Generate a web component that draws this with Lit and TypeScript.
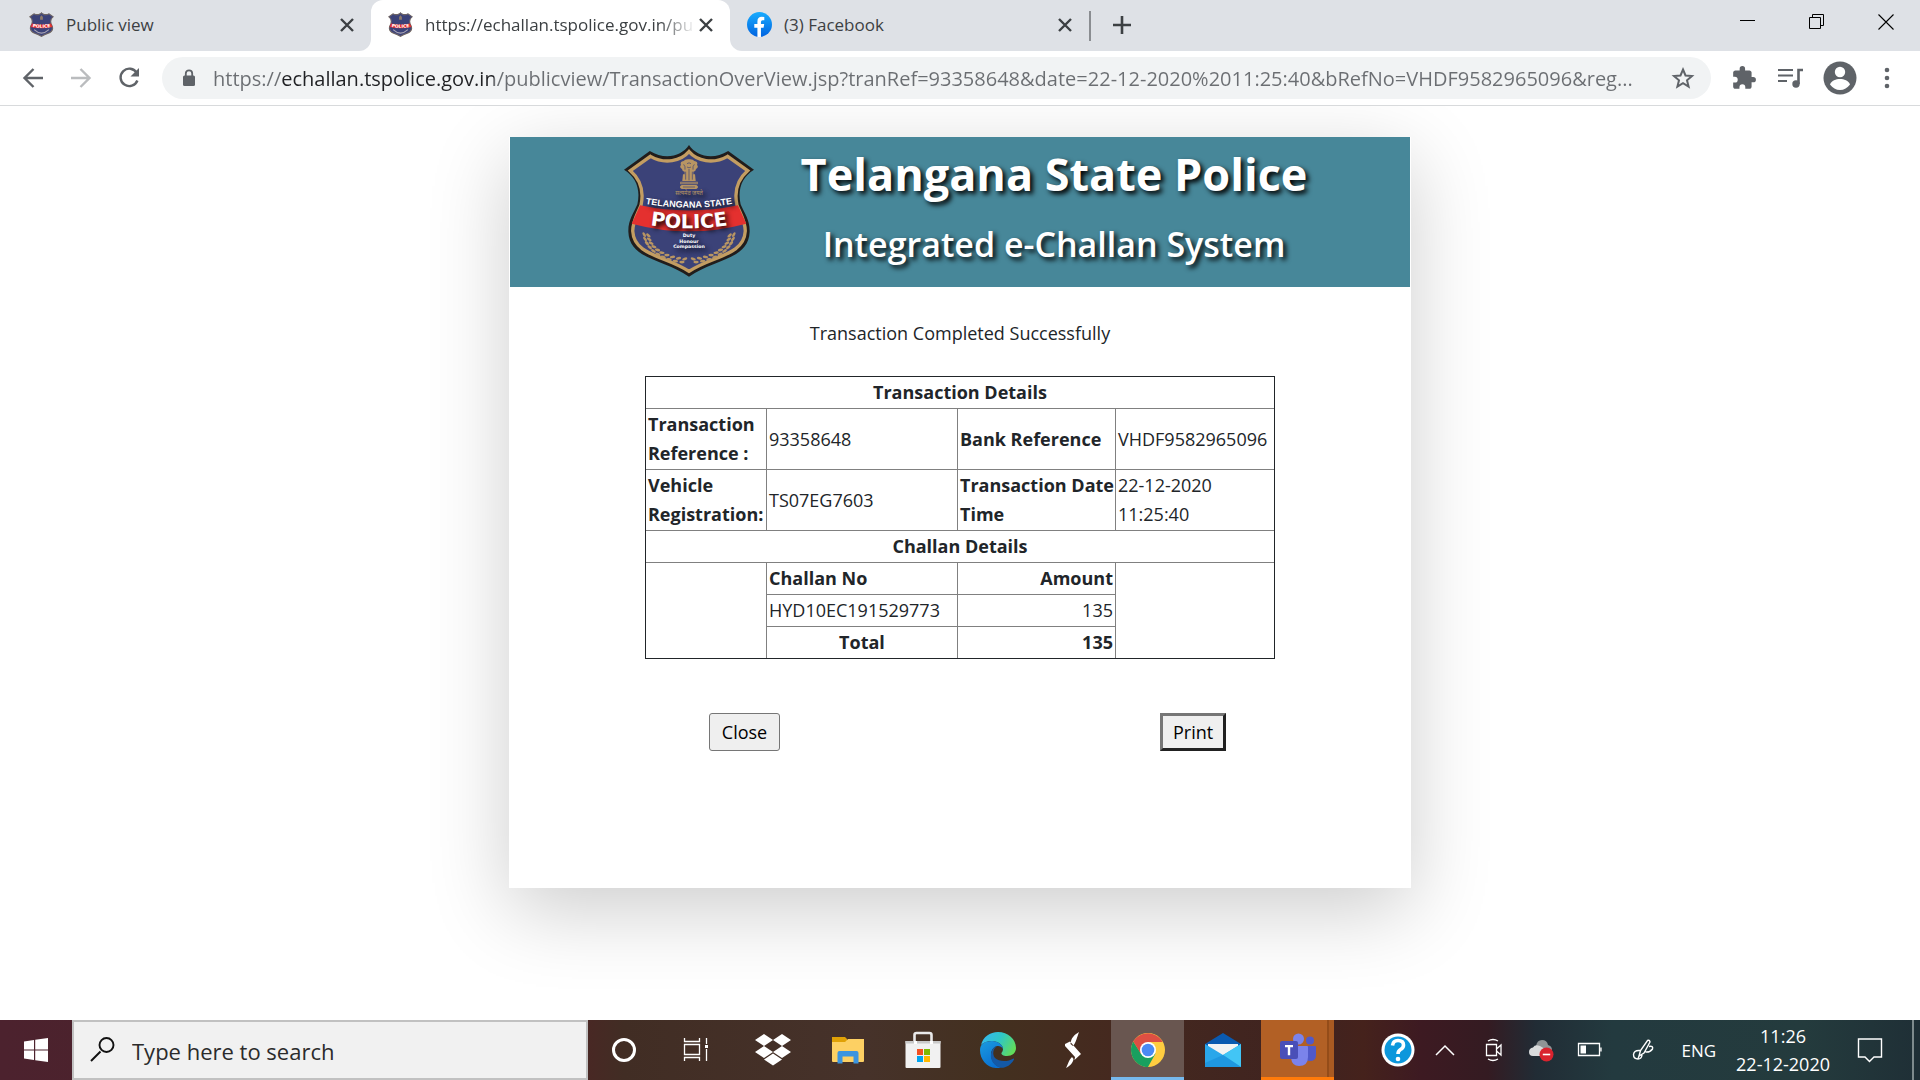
import { LitElement, html, css, svg } from "lit";
import { customElement, property } from "lit/decorators.js";

const SHIELD =
  "M194 0 C172 34 122 46 77 18 L0 74 C36 96 50 132 40 178 C28 206 12 226 13 260 C16 345 120 342 194 395 C268 342 372 345 375 260 C376 226 360 206 348 178 C338 132 352 96 388 74 L311 18 C266 46 216 34 194 0 Z";
const SHIELD_INNER =
  "M194 20 C170 48 122 59 79 34 L19 77 C50 104 60 136 51 180 C40 208 26 228 26 258 C30 333 125 332 194 379 C263 332 358 333 362 258 C362 228 348 208 337 180 C328 136 338 104 369 77 L309 34 C266 59 218 48 194 20 Z";

/** Laurel leaves of the crest, laid in pairs along two mirrored arcs. */
const leaves = Array.from({ length: 10 }, (_, i) => {
  const t = i / 9;
  const a = Math.PI * (0.98 - t * 0.44);
  return { x: 194 + 128 * Math.cos(a), y: 266 + 82 * Math.sin(a), r: 60 - t * 60 };
});

@customElement("police-crest")
export class PoliceCrest extends LitElement {
  @property({ type: Boolean }) compact = false;

  static styles = css`
    :host { display: block; flex: none; }
    svg { display: block; width: 100%; height: 100%; }
    .label { font-family: "Liberation Sans", Arial, sans-serif; font-weight: 700; fill: #fff; }
    .wide { font-family: "DejaVu Sans", Verdana, sans-serif; font-weight: 700; fill: #fff; }
    .motto { font-family: "Noto Sans Devanagari", "Noto Sans", sans-serif; fill: #b89563; }
  `;

  render() {
    const detail = svg`
      <g fill="#b89563">
        <path d="M170 60 q-4 -10 8 -12 q4 -6 16 -5 q12 -1 16 5 q12 2 8 12 q6 6 -3 12 q-1 8 -8 8 v12 h-26 v-12 q-7 0 -8 -8 q-9 -6 -3 -12z"/>
        <path d="M176 88 h36 l2 20 h-40z"/>
        <path d="M168 110 h52 v8 h-52z M172 120 h44 q10 6 0 12 h-44 q-10 -6 0 -12z"/>
      </g>
      <g fill="none" stroke="#3b4278" stroke-width="2">
        <path d="M178 58 q6 6 4 16 M210 58 q-6 6 -4 16 M188 56 q6 -5 12 0 M188 66 q6 5 12 0 M184 80 v24 M194 72 v34 M204 80 v24 M170 114 h48 M176 126 h36"/>
      </g>
      <text class="motto" x="194" y="150" font-size="17" text-anchor="middle">सत्यमेव जयते</text>
      <path id="arc1" d="M50 174 Q194 202 338 174" fill="none"/>
      <text class="label" font-size="27" text-anchor="middle"><textPath href="#arc1" startOffset="50%">TELANGANA STATE</textPath></text>
      <g class="wide" font-size="14" text-anchor="middle">
        <text x="194" y="276">Duty</text>
        <text x="194" y="293">Honour</text>
        <text x="194" y="310">Compassion</text>
      </g>
      <g fill="#b89563">
        ${leaves.map(
          (l) => svg`
          <ellipse cx=${l.x - 5} cy=${l.y + 4} rx="8" ry="4" transform="rotate(${l.r} ${l.x} ${l.y})"/>
          <ellipse cx=${l.x + 5} cy=${l.y - 4} rx="8" ry="4" transform="rotate(${l.r - 20} ${l.x} ${l.y})"/>
          <ellipse cx=${388 - l.x + 5} cy=${l.y + 4} rx="8" ry="4" transform="rotate(${-l.r} ${388 - l.x} ${l.y})"/>
          <ellipse cx=${388 - l.x - 5} cy=${l.y - 4} rx="8" ry="4" transform="rotate(${20 - l.r} ${388 - l.x} ${l.y})"/>`
        )}
      </g>`;
    return html`<svg viewBox="0 0 388 396" preserveAspectRatio="none" role="img" aria-label="Telangana State Police">
      <path d=${SHIELD} fill=${this.compact ? "#6d6258" : "#211d1c"} />
      <path d=${SHIELD_INNER} fill="#3b4278" stroke=${this.compact ? "#6f6a78" : "#c39d62"} stroke-width="10" />
      <path d="M48 181 Q194 212 340 181 L365 236 Q194 282 23 236 Z" fill="#e4302f" />
      <path id="arc2" d="M26 230 Q194 270 362 230" fill="none" />
      <text class="wide" font-size=${this.compact ? 70 : 58} text-anchor="middle">
        <textPath href="#arc2" startOffset="50%">POLICE</textPath>
      </text>
      ${this.compact
        ? svg`<path d="M194 50 l22 30 v44 h-44 v-44z" fill="#8d7a68"/><path d="M80 280 Q194 390 308 280" fill="none" stroke="#a9a4b4" stroke-width="16"/>`
        : detail}
    </svg>`;
  }
}

const stroke = (d: string, w = 2) =>
  svg`<path d=${d} fill="none" stroke="currentColor" stroke-width=${w}/>`;

const cross = html`<svg class="cross" viewBox="0 0 16 16">${stroke("M2 2 L14 14 M14 2 L2 14", 2.4)}</svg>`;

@customElement("browser-chrome")
export class BrowserChrome extends LitElement {
  static styles = css`
    :host { display: block; font-family: "Open Sans", "Segoe UI", sans-serif; }
    * { box-sizing: border-box; }
    svg { display: block; flex: none; }
    button { border: 0; padding: 0; margin: 0; background: none; color: inherit; display: flex; align-items: center; justify-content: center; }
    .tabs { display: flex; height: 51px; background: #dee1e6; color: #3c4043; }
    .tab { display: flex; align-items: center; width: 359px; padding: 0 16px 2px 17px; gap: 12px; }
    .tab.first { width: 371px; padding-left: 29px; border-bottom-right-radius: 12px; background: #dee1e6; }
    .tab.active { background: #fff; border-radius: 12px 12px 0 0; }
    .tab.last { border-bottom-left-radius: 12px; background: #dee1e6; }
    .under { background: linear-gradient(#dee1e6 50%, #fff 50%); display: flex; }
    .title { flex: 1; min-width: 0; overflow: hidden; white-space: nowrap; font-size: 17px; line-height: 24px; }
    .active .title { margin-right: -10px; -webkit-mask-image: linear-gradient(90deg, #000 86%, transparent); mask-image: linear-gradient(90deg, #000 86%, transparent); }
    .fav { width: 25px; height: 25px; }
    .cross { width: 16px; height: 16px; }
    .new { border-left: 2px solid #8a8d91; height: 30px; margin-top: 11px; padding: 0 0 2px 21px; }
    .spacer { flex: 1; }
    .win { width: 69px; height: 43px; color: #000; }
    .bar { display: flex; align-items: center; height: 55px; padding: 0 22px 0 21px; background: #fff; border-bottom: 1px solid #d8dadc; color: #5f6368; }
    .nav { width: 24px; height: 24px; margin-right: 24px; }
    .nav.off { color: #babcbe; }
    .nav.reload { margin-right: 21px; }
    .omni { flex: 1; min-width: 0; display: flex; align-items: center; height: 42px; border-radius: 21px; background: #f1f3f4; padding: 0 16px 0 19px; }
    .omni input {
      flex: 1; min-width: 0; border: 0; outline: 0; padding: 0; margin: 0 12px 0 16px; height: 34px;
      font-family: inherit; font-size: 20px; text-overflow: ellipsis;
      color: transparent; -webkit-text-fill-color: transparent;
      background-image: linear-gradient(90deg, #6b6e72 68px, #202124 68px, #202124 281px, #6b6e72 281px);
      -webkit-background-clip: text; background-clip: text;
    }
    .tools { display: flex; align-items: center; margin-left: 20px; gap: 19px; }
  `;

  render() {
    return html`
      <div class="tabs">
        <div class="under">
          <div class="tab first"><police-crest class="fav" compact></police-crest><span class="title">Public view</span><button aria-label="Close tab">${cross}</button></div>
          <div class="tab active"><police-crest class="fav" compact></police-crest><span class="title">https://echallan.tspolice.gov.in/pu</span><button aria-label="Close tab">${cross}</button></div>
          <div class="tab last">
            <svg class="fav" viewBox="0 0 24 24"><defs><linearGradient id="fb" x1="0" y1="0" x2="0" y2="1"><stop offset="0" stop-color="#18acfe"/><stop offset="1" stop-color="#0163e0"/></linearGradient></defs><circle cx="12" cy="12" r="12" fill="url(#fb)"/><path d="M10 24 v-9 H7 v-3.500 h3 V9 q0-4.400 4.200-4.400 q1.400 0 2.400.3 v3 h-1.600 q-1.600 0-1.600 1.600 v2 h3.100 l-.6 3.500 h-2.500 v9 z" fill="#fff"/></svg>
            <span class="title">(3) Facebook</span><button aria-label="Close tab">${cross}</button>
          </div>
        </div>
        <button class="new" aria-label="New tab"><svg width="20" height="20" viewBox="0 0 20 20">${stroke("M10 1 V19 M1 10 H19", 2.6)}</svg></button>
        <span class="spacer"></span>
        <button class="win" aria-label="Minimize"><svg width="16" height="16" viewBox="0 0 16 16">${stroke("M0 6.500 H15", 1)}</svg></button>
        <button class="win" aria-label="Restore"><svg width="16" height="16" viewBox="0 0 16 16">${stroke("M.5 3.500 H11.500 V14.500 H.5 Z M3.500 3.500 V.5 H14.500 V11.500 H11.500", 1)}</svg></button>
        <button class="win" aria-label="Close window"><svg width="16" height="16" viewBox="0 0 16 16">${stroke("M.5 .5 L15.500 15.500 M15.500 .5 L.5 15.500", 1.1)}</svg></button>
      </div>
      <div class="bar">
        <button class="nav" aria-label="Back"><svg width="24" height="24" viewBox="0 0 24 24">${stroke("M22 12 H4 M12.500 3 L3.500 12 L12.500 21", 2.4)}</svg></button>
        <button class="nav off" aria-label="Forward"><svg width="24" height="24" viewBox="0 0 24 24">${stroke("M2 12 H20 M11.500 3 L20.500 12 L11.500 21", 2.4)}</svg></button>
        <button class="nav reload" aria-label="Reload"><svg width="24" height="24" viewBox="0 0 24 24">${stroke("M19.800 7 A8.700 8.700 0 1 0 20.400 14.500", 2.4)}<path d="M22 2 V10.500 H13.500 Z" fill="currentColor"/></svg></button>
        <div class="omni">
          <svg width="16" height="20" viewBox="0 0 16 20"><rect x="2" y="7.500" width="12" height="10.500" rx="1.500" fill="currentColor"/>${stroke("M4.800 8 V5.500 A3.200 3.200 0 0 1 11.200 5.500 V8", 1.8)}</svg>
          <input type="text" aria-label="Address bar" value="https://echallan.tspolice.gov.in/publicview/TransactionOverView.jsp?tranRef=93358648&amp;date=22-12-2020%2011:25:40&amp;bRefNo=VHDF9582965096&amp;reg..." />
          <button aria-label="Bookmark this page"><svg width="24" height="24" viewBox="0 0 24 24">${stroke("M12 3.500 L14.500 9.500 L21 10 L16 14.300 L17.600 20.600 L12 17.200 L6.400 20.600 L8 14.300 L3 10 L9.500 9.500 Z", 2)}</svg></button>
        </div>
        <div class="tools">
          <button aria-label="Extensions"><svg width="26" height="26" viewBox="0 0 24 24"><path fill="currentColor" d="M20.500 11H19V7c0-1.100-.9-2-2-2h-4V3.500a2.500 2.500 0 0 0-5 0V5H4c-1.100 0-2 .9-2 2v3.800h1.500a2.700 2.700 0 0 1 0 5.400H2V20c0 1.100.9 2 2 2h3.800v-1.500a2.700 2.700 0 0 1 5.400 0V22H17c1.100 0 2-.9 2-2v-4h1.500a2.500 2.500 0 0 0 0-5z"/></svg></button>
          <button aria-label="Media controls"><svg width="28" height="24" viewBox="0 0 28 24">${stroke("M2 4 H17 M2 9.500 H17 M2 15 H11", 2.2)}${stroke("M22.500 18 V4 H27", 2.6)}<circle cx="20" cy="18" r="3.700" fill="currentColor"/></svg></button>
          <button aria-label="Profile"><svg width="34" height="34" viewBox="0 0 34 34"><circle cx="17" cy="17" r="16.500" fill="currentColor"/><circle cx="17" cy="11" r="5.200" fill="#fff"/><path d="M7 23.500 C8.500 19.500 13 18 17 18 C21 18 25.500 19.500 27 23.500 C24.500 27 21 29 17 29 C13 29 9.500 27 7 23.500Z" fill="#fff"/></svg></button>
          <button aria-label="Menu"><svg width="22" height="22" viewBox="0 0 22 22"><g fill="currentColor"><circle cx="11" cy="3" r="2.300"/><circle cx="11" cy="11" r="2.300"/><circle cx="11" cy="19" r="2.300"/></g></svg></button>
        </div>
      </div>`;
  }
}

@customElement("challan-page")
export class ChallanPage extends LitElement {
  static styles = css`
    :host { display: flex; justify-content: center; align-items: flex-start; padding-top: 31px; overflow: hidden; background: #fff; color: #212529; font-family: "Open Sans", "Segoe UI", sans-serif; font-size: 18px; line-height: 29px; }
    * { box-sizing: border-box; }
    .card { width: 47%; min-width: 760px; background: #fff; padding: 0 1px 137px; box-shadow: 0 22px 76px rgba(0, 0, 0, 0.2); }
    .banner { display: flex; align-items: center; height: 150px; background: #478799; color: #fff; padding: 0 100px 0 114px; text-align: center; text-shadow: 3px 3px 5px #000; }
    .crest { width: 130px; height: 132px; margin-bottom: 2px; }
    .names { flex: 1; white-space: nowrap; padding: 0 0 8px 44px; }
    h1 { margin: 0; font-size: 45px; line-height: 64px; font-weight: 700; }
    h2 { margin: 0; font-size: 34px; line-height: 60px; font-weight: 600; padding-top: 8px; }
    .done { margin: 32px 0 28px; text-align: center; }
    table { width: 630px; margin: 0 auto; border-collapse: collapse; table-layout: fixed; outline: 1px solid #212529; outline-offset: -1px; }
    .c1 { width: 121px; }
    .c2 { width: 191px; }
    .c3 { width: 158px; }
    th, td { border: 1px solid #808080; padding: 1px 2px; text-align: left; vertical-align: middle; }
    .keep { white-space: nowrap; }
    .mid { text-align: center; }
    .num { text-align: right; }
    .actions { display: flex; justify-content: space-between; padding: 54px 184px 0 199px; }
    .actions button { font-family: inherit; font-size: 18px; line-height: 24px; height: 38px; background: #efefef; color: #000; padding: 0 12px; border: 1px solid #767676; border-radius: 3px; }
    .actions .print { border: 3px solid; border-color: #767676 #212121 #212121 #767676; border-radius: 0; padding: 0 10px; }
  `;

  render() {
    return html`
      <section class="card">
        <header class="banner">
          <police-crest class="crest"></police-crest>
          <div class="names"><h1>Telangana State Police</h1><h2>Integrated e-Challan System</h2></div>
        </header>
        <p class="done">Transaction Completed Successfully</p>
        <table>
          <colgroup><col class="c1" /><col class="c2" /><col class="c3" /><col /></colgroup>
          <tbody>
            <tr><th class="mid" colspan="4">Transaction Details</th></tr>
            <tr><th>Transaction Reference :</th><td>93358648</td><th>Bank Reference</th><td>VHDF9582965096</td></tr>
            <tr><th>Vehicle Registration:</th><td>TS07EG7603</td><th class="keep">Transaction Date<br />Time</th><td>22-12-2020<br />11:25:40</td></tr>
            <tr><th class="mid" colspan="4">Challan Details</th></tr>
            <tr><td rowspan="3"></td><th>Challan No</th><th class="num">Amount</th><td rowspan="3"></td></tr>
            <tr><td>HYD10EC191529773</td><td class="num">135</td></tr>
            <tr><th class="mid">Total</th><th class="num">135</th></tr>
          </tbody>
        </table>
        <div class="actions"><button>Close</button><button class="print">Print</button></div>
      </section>`;
  }
}

const apps = {
  dropbox: html`<svg width="38" height="32" viewBox="0 0 38 32"><path fill="#fff" d="M10 0 L19 6 L10 12 L1 6Z M28 0 L37 6 L28 12 L19 6Z M10 12 L19 18 L10 24 L1 18Z M28 12 L37 18 L28 24 L19 18Z M19 19.500 L28 25.500 L19 31.500 L10 25.500Z"/></svg>`,
  folder: html`<svg width="32" height="28" viewBox="0 0 32 28"><path d="M0 1 h13 l2 2 v5 H0z" fill="#e0a106"/><path d="M0 6 h13 l3-3 h16 v22 q0 1-1 1 H1 q-1 0-1-1z" fill="#fdd063"/><path d="M5.500 27.500 V17 q0-2 2-2 h17 q2 0 2 2 v10.500 h-5 v-7 h-11 v7z" fill="#3b94df"/></svg>`,
  store: html`<svg width="36" height="38" viewBox="0 0 36 38"><path d="M9.500 13 V4 q0-2 2-2 h13 q2 0 2 2 v9" fill="none" stroke="#e9e9e9" stroke-width="2.600"/><path d="M.5 10 h35 v26 q0 1-1 1 h-33 q-1 0-1-1z" fill="#f1f1f1"/><path d="M.5 10 h35 v2.500 h-35z" fill="#c9c9c9"/><path d="M9 10 h3 v3 h-3z M25 10 h3 v3 h-3z" fill="#fff"/><path d="M12 18 h6 v6 h-6z" fill="#f25022"/><path d="M19 18 h6 v6 h-6z" fill="#7fba00"/><path d="M12 25 h6 v6 h-6z" fill="#00a4ef"/><path d="M19 25 h6 v6 h-6z" fill="#ffb900"/></svg>`,
  edge: html`<svg width="36" height="36" viewBox="0 0 36 36"><defs><linearGradient id="e1" x1="0" x2="1" y1=".2" y2=".6"><stop offset="0" stop-color="#35b8f2"/><stop offset=".5" stop-color="#2fc7c6"/><stop offset="1" stop-color="#62dc5a"/></linearGradient><linearGradient id="e2" x1="0" x2=".6" y1="0" y2="1"><stop offset="0" stop-color="#1a9be0"/><stop offset="1" stop-color="#0a6fd0"/></linearGradient></defs><path d="M1 13 C3 5 10 0 18 0 C28 0 36 7 36 16 C36 21 32 24 27 24 C23 24 21 22.500 21.500 21 C22 20 23 19 23 17 C23 13 18 9 12 9 C7 9 3 11 1 13Z" fill="url(#e1)"/><path d="M0 18 C0 12 5 9 12 9 C18 9 23 13 23 17 C22 14.500 19 13.500 17 14 C13 15 11 19 11 22 C11 29 15 34 21 35.700 C9 38 0 29 0 18Z" fill="url(#e2)"/><path d="M17 14 C13 17 12 22 15 26 C19 30 28 30 33.500 26.500 C34 26.500 34.200 27 34 27.500 C31 33 26 36 21 35.800 C14 34 10 28 11 22 C11.500 18 13.500 15 17 14Z" fill="#1459a6"/></svg>`,
  slash: html`<svg width="18" height="36" viewBox="0 0 18 36"><path fill="#fff" d="M15 0 C10 3 7 6 6.500 12 L9 14 C12 11 13 5 15 0Z M1 12 L6 9.500 L17 22 L10.500 28 L11 25 L1 14Z M8 25 C4 29 4 33 2 36 C6 34 9 31 9.500 27Z"/></svg>`,
  chrome: html`<svg width="34" height="34" viewBox="0 0 34 34"><circle cx="17" cy="17" r="17" fill="#ffcd40"/><path d="M2.300 8.500 A17 17 0 0 0 17 34 L24.500 20.500 L17 17 L10 20.500Z" fill="#19a05f"/><path d="M2.300 8.500 L10 21 L17 13 L17 9 L31.700 9 A17 17 0 0 0 2.300 8.500Z" fill="#dd4f43"/><circle cx="17" cy="17" r="8" fill="#fff"/><circle cx="17" cy="17" r="6.300" fill="#4a8af4"/></svg>`,
  mail: html`<svg width="36" height="34" viewBox="0 0 36 34"><path d="M0 11 L18 0 L36 11 V14 H0Z" fill="#0a5ab0"/><path d="M3 11 h30 v12 H3z" fill="#f3f3f3"/><path d="M0 11 L18 22 L36 11 V34 H0Z" fill="#2aa7ea"/><path d="M36 11 V34 L18 22Z" fill="#42c5f5"/><path d="M0 34 L0 30 L18 22 L36 34Z" fill="#1f97e0"/></svg>`,
  teams: html`<svg width="36" height="34" viewBox="0 0 36 34"><circle cx="18.500" cy="6" r="5.500" fill="#7b83eb"/><circle cx="30" cy="7.500" r="4" fill="#5059c9"/><path d="M24 13 h11 q1 0 1 1 v8 q0 6-6 6 q-4 0-6-4z" fill="#5059c9"/><path d="M11 13 h16 q1 0 1 1 v10 q0 9-9 9 q-7 0-8-8z" fill="#7b83eb"/><rect x="0" y="8" width="18" height="18" rx="2" fill="#4a4fb8"/><path d="M5 12 h8 v2.200 h-2.800 v8 h-2.400 v-8 H5z" fill="#fff"/></svg>`,
};

@customElement("task-bar")
export class TaskBar extends LitElement {
  static styles = css`
    :host {
      display: flex; height: 60px; color: #fff; font-family: "Open Sans", "Segoe UI", sans-serif;
      background: linear-gradient(90deg, #4c222e 0, #4a2329 20%, #482824 30.700%, #412d24 32.500%, #46322a 45%, #43301f 52%, #45291f 58%, #3f2320 68%, #45221c 71%, #3d1a22 74%, #341b22 77.500%, #212c35 80%, #233a3f 84%, #243b3d 94%, #1f2f36 100%);
    }
    * { box-sizing: border-box; }
    svg { display: block; flex: none; }
    button { border: 0; padding: 0; margin: 0; background: none; color: inherit; font: inherit; display: flex; align-items: center; justify-content: center; }
    .start { width: 72px; }
    .search { display: flex; align-items: center; width: 516px; background: #f1f1f1; border: 2px solid #c1c1c1; padding: 0 16px; color: #111; }
    .search input { flex: 1; min-width: 0; border: 0; outline: 0; background: none; font-family: inherit; font-size: 22px; padding: 2px 0 0; margin-left: 16px; height: 40px; color: #2b2b2b; }
    .search input::placeholder { color: #2b2b2b; opacity: 1; }
    .sys { width: 72px; }
    .apps { display: flex; gap: 2px; padding-left: 4px; }
    .app { width: 73px; border-bottom: 3px solid transparent; border-top: 3px solid transparent; }
    .app.on { background: #695650; border-top-color: #695650; border-bottom-color: #76b9ed; }
    .app.hot { background: linear-gradient(90deg, #b26025 66px, #944c19 66px, #944c19 68px, #a95a22 68px); border-top: 0; padding-top: 3px; border-bottom-color: #ff7b0a; }
    .spacer { flex: 1; }
    .tray { display: flex; align-items: center; }
    .i1 { width: 34px; margin-right: 20px; }
    .i2 { width: 20px; margin-right: 29px; }
    .i3 { width: 20px; margin-right: 24px; }
    .i4 { width: 26px; margin-right: 23px; }
    .i5 { width: 26px; margin-right: 28px; }
    .i6 { width: 24px; margin-right: 26px; }
    .lang { font-size: 17px; margin-right: 20px; }
    .clock { flex-direction: column; font-size: 18px; line-height: 28px; margin-right: 28px; white-space: nowrap; }
    .i7 { width: 24px; margin-right: 30px; }
    .desk { width: 8px; height: 60px; border-left: 2px solid #7e8a8d; }
  `;

  render() {
    return html`
      <button class="start" aria-label="Start"><svg width="24" height="24" viewBox="0 0 24 24"><path fill="#fff" d="M0 3.400 L10 2 V11.400 H0Z M11.200 1.800 L24 0 V11.400 H11.200Z M0 12.600 H10 V22 L0 20.600Z M11.200 12.600 H24 V24 L11.200 22.200Z"/></svg></button>
      <label class="search">
        <svg width="26" height="26" viewBox="0 0 26 26">${stroke("M10.500 14.500 L1 24", 2)}<circle cx="16.500" cy="8" r="7" fill="none" stroke="currentColor" stroke-width="1.900"/></svg>
        <input type="text" aria-label="Search" placeholder="Type here to search" />
      </label>
      <button class="sys" aria-label="Cortana"><svg width="26" height="26" viewBox="0 0 26 26"><circle cx="13" cy="13" r="10.500" fill="none" stroke="#fff" stroke-width="3"/></svg></button>
      <button class="sys" aria-label="Task view"><svg width="26" height="26" viewBox="0 0 26 26">${stroke("M1.500 1 V4.500 H16.500 V1 M1.500 7.500 H16.500 V17.500 H1.500Z M1.500 24 V20.500 H16.500 V24 M23.500 1 V7 M23.500 12 V24", 1.3)}<path d="M22 8 h3 v3 h-3z" fill="#fff"/></svg></button>
      <div class="apps">
        <button class="app" aria-label="Dropbox">${apps.dropbox}</button>
        <button class="app" aria-label="File Explorer">${apps.folder}</button>
        <button class="app" aria-label="Store">${apps.store}</button>
        <button class="app" aria-label="Edge">${apps.edge}</button>
        <button class="app" aria-label="Launcher">${apps.slash}</button>
        <button class="app on" aria-label="Chrome">${apps.chrome}</button>
        <button class="app" aria-label="Mail">${apps.mail}</button>
        <button class="app hot" aria-label="Teams">${apps.teams}</button>
      </div>
      <span class="spacer"></span>
      <div class="tray">
        <button class="i1" aria-label="Help"><svg width="34" height="34" viewBox="0 0 34 34"><circle cx="17" cy="17" r="16.500" fill="#fff"/><circle cx="17" cy="17" r="13.500" fill="#0c97dc"/><path d="M11.500 12.500 Q12 7.500 17 7.500 Q22.500 7.500 22.500 12 Q22.500 15 19.500 16.500 Q17 18 17 21" fill="none" stroke="#fff" stroke-width="3.600"/><circle cx="17" cy="26" r="2.300" fill="#fff"/></svg></button>
        <button class="i2" aria-label="Show hidden icons"><svg width="20" height="12" viewBox="0 0 20 12">${stroke("M1 11 L10 2 L19 11", 1.5)}</svg></button>
        <button class="i3" aria-label="Meet now"><svg width="20" height="24" viewBox="0 0 20 24">${stroke("M4 3 Q9 0 14 3 M4 21 Q9 24 14 21 M2.500 6.500 H12.500 V17.500 H2.500Z M12.500 11 L17 7 V17 L12.500 13", 1.3)}</svg></button>
        <button class="i4" aria-label="OneDrive"><svg width="26" height="24" viewBox="0 0 26 24"><path d="M8 8 Q9 2 14 2 Q19 2 20 7 Q24 8 24 12 L12 16Z" fill="#8f9496"/><path d="M5 18 Q1 18 1 14 Q1 10 5 9.500 Q7 6 12 8 L22 14 L20 18Z" fill="#d9dbdc"/><circle cx="18.500" cy="16.500" r="7" fill="#d9232e"/><path d="M14.800 16.500 h7.400" stroke="#fff" stroke-width="1.600"/></svg></button>
        <button class="i5" aria-label="Battery"><svg width="26" height="16" viewBox="0 0 26 16">${stroke("M1.500 1.500 H22.500 V13.500 H1.500Z M24 5.500 V9.500", 1.3)}<path d="M3.500 3.500 h5.500 v8 h-5.500z" fill="#fff"/></svg></button>
        <button class="i6" aria-label="Windows Ink"><svg width="24" height="24" viewBox="0 0 24 24">${stroke("M8 18 L9.500 12.500 L16.500 2.500 Q18.500 1.500 19 4 L13 15 Z M8 18 L7 21 M18 8.500 Q22.500 7.500 21.500 11 Q19 14.500 14.500 14 M9 12.500 Q3 12 2.500 16.500 Q2.500 21 7 21 Q10.500 21 11 17", 1.4)}</svg></button>
        <span class="lang">ENG</span>
        <button class="clock"><span>11:26</span><span>22-12-2020</span></button>
        <button class="i7" aria-label="Notifications"><svg width="26" height="26" viewBox="0 0 26 26">${stroke("M1.500 2 H24.500 V20 H17 L12.500 24.500 L8 20 H1.500Z", 1.4)}</svg></button>
        <button class="desk" aria-label="Show desktop"></button>
      </div>`;
  }
}

@customElement("app-root")
export class AppRoot extends LitElement {
  static styles = css`
    :host { display: flex; flex-direction: column; min-height: 100vh; background: #fff; }
    challan-page { flex: 1; }
  `;

  render() {
    return html`<browser-chrome></browser-chrome><challan-page></challan-page><task-bar></task-bar>`;
  }
}
